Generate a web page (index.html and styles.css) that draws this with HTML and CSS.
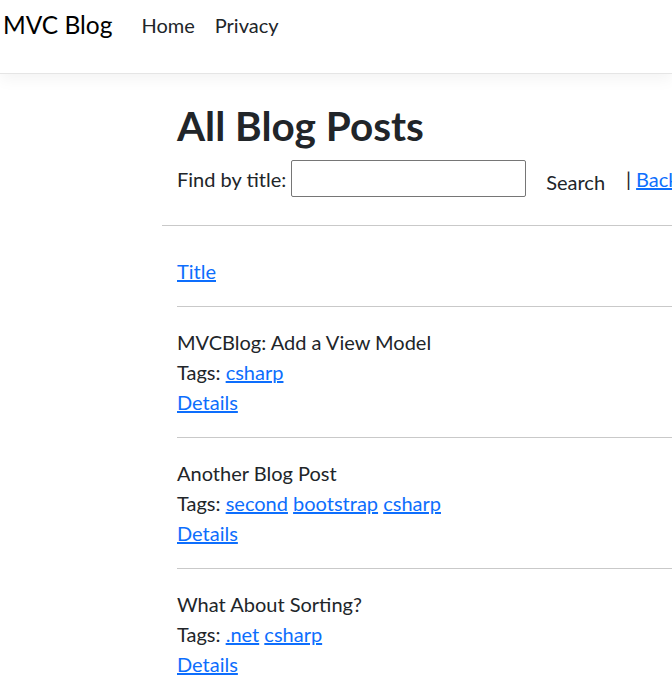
FILE: index.html
```html
<!DOCTYPE html>
<html lang="en">
<head>
<meta charset="utf-8">
<title>All Blog Posts - MVC Blog</title>
<link rel="stylesheet" href="styles.css">
</head>
<body>
<header class="navbar">
  <a class="brand" href="#">MVC Blog</a>
  <nav class="nav">
    <a class="nav-link" href="#">Home</a>
    <a class="nav-link" href="#">Privacy</a>
  </nav>
</header>
<main class="main">
  <div class="inner">
    <h1 class="title">All Blog Posts</h1>
    <form class="search">
      <span class="label">Find by title:</span>
      <input class="search-input" type="text">
      <button class="search-btn" type="button">Search</button>
      <span class="sep">|</span>
      <a class="link" href="#">Back to full list</a>
    </form>
  </div>
  <hr class="rule">
  <div class="inner">
    <div class="table">
      <div class="thead"><a class="link" href="#">Title</a></div>
      <div class="row">
        <div>MVCBlog: Add a View Model</div>
        <div>Tags: <a class="link" href="#">csharp</a></div>
        <div><a class="link" href="#">Details</a></div>
      </div>
      <div class="row">
        <div>Another Blog Post</div>
        <div>Tags: <a class="link" href="#">second</a> <a class="link" href="#">bootstrap</a> <a class="link" href="#">csharp</a></div>
        <div><a class="link" href="#">Details</a></div>
      </div>
      <div class="row last">
        <div>What About Sorting?</div>
        <div>Tags: <a class="link" href="#">.net</a> <a class="link" href="#">csharp</a></div>
        <div><a class="link" href="#">Details</a></div>
      </div>
    </div>
  </div>
</main>
</body>
</html>
```
FILE: styles.css
```css
html, body {
  margin: 0;
  padding: 0;
}
body {
  font-family: Lato, "Open Sans", sans-serif;
  font-size: 20px;
  line-height: 30px;
  color: #212529;
  background: #fff;
  overflow: hidden;
}
a { text-decoration: none; }

.navbar {
  display: flex;
  align-items: flex-start;
  height: 73px;
  padding-left: 3px;
  border-bottom: 1px solid #e5e5e5;
  box-shadow: 0 5px 15px rgba(0, 0, 0, 0.05);
}
.brand {
  font-size: 24.5px;
  line-height: 38px;
  margin-top: 6px;
  color: #000;
  margin-right: 19px;
}
.nav {
  display: flex;
  margin-top: 10px;
}
.nav-link {
  color: #212529;
  padding: 0 10px;
  line-height: 30px;
}

.main {
  margin-left: 162px;
}
.inner {
  padding-left: 15px;
}
.title {
  font-size: 40.5px;
  line-height: 48px;
  font-weight: 700;
  margin: 28px 0 0;
}
.search {
  display: flex;
  align-items: center;
  white-space: nowrap;
  margin-top: 10px;
  height: 37px;
}
.label {
  margin-right: 5px;
}
.search-input {
  box-sizing: border-box;
  width: 235px;
  height: 37px;
  border: 1px solid #767676;
  border-radius: 2px;
  margin: 0;
  padding: 2px 4px;
  font: inherit;
}
.search-btn {
  font: inherit;
  color: #212529;
  background: transparent;
  border: 0;
  padding: 6px 15px 0 20px;
  margin: 0;
}
.sep {
  margin-left: 6px;
  margin-right: 5px;
}
.link {
  color: #0d6efd;
  text-decoration: underline;
}
.rule {
  border: 0;
  border-top: 1px solid #c9c9c9;
  margin: 28px 0 0;
  height: 0;
}
.table {
  padding-top: 30px;
}
.thead {
  padding-bottom: 20px;
  border-bottom: 1px solid #c9c9c9;
}
.row {
  padding: 20px 0 20px;
  border-bottom: 1px solid #c9c9c9;
}
.row.last {
  border-bottom: 0;
}
```
